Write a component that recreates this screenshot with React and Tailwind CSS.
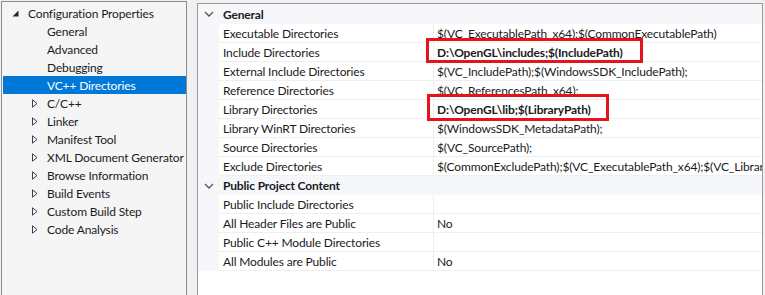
const treeItems = [
  { label: 'General' },
  { label: 'Advanced' },
  { label: 'Debugging' },
  { label: 'VC++ Directories', selected: true },
  { label: 'C/C++', expandable: true },
  { label: 'Linker', expandable: true },
  { label: 'Manifest Tool', expandable: true },
  { label: 'XML Document Generator', expandable: true },
  { label: 'Browse Information', expandable: true },
  { label: 'Build Events', expandable: true },
  { label: 'Custom Build Step', expandable: true },
  { label: 'Code Analysis', expandable: true },
];

const sections = [
  {
    title: 'General',
    rows: [
      { name: 'Executable Directories', value: '$(VC_ExecutablePath_x64);$(CommonExecutablePath)' },
      { name: 'Include Directories', value: 'D:\\OpenGL\\includes;$(IncludePath)', bold: true, box: 'include' },
      { name: 'External Include Directories', value: '$(VC_IncludePath);$(WindowsSDK_IncludePath);' },
      { name: 'Reference Directories', value: '$(VC_ReferencesPath_x64);' },
      { name: 'Library Directories', value: 'D:\\OpenGL\\lib;$(LibraryPath)', bold: true, box: 'library' },
      { name: 'Library WinRT Directories', value: '$(WindowsSDK_MetadataPath);' },
      { name: 'Source Directories', value: '$(VC_SourcePath);' },
      { name: 'Exclude Directories', value: '$(CommonExcludePath);$(VC_ExecutablePath_x64);$(VC_LibraryPath_x64);' },
    ],
  },
  {
    title: 'Public Project Content',
    rows: [
      { name: 'Public Include Directories', value: '' },
      { name: 'All Header Files are Public', value: 'No' },
      { name: 'Public C++ Module Directories', value: '' },
      { name: 'All Modules are Public', value: 'No' },
    ],
  },
];

function HollowArrow() {
  return (
    <svg width="6" height="9" viewBox="0 0 6 9" className="shrink-0">
      <path d="M0.5 0.8 L5 4.5 L0.5 8.2 Z" fill="none" stroke="#404040" strokeWidth="1" />
    </svg>
  );
}

function SolidArrow() {
  return (
    <svg width="7" height="7" viewBox="0 0 7 7" className="shrink-0">
      <path d="M6.5 0.5 L6.5 6.5 L0.5 6.5 Z" fill="#262626" />
    </svg>
  );
}

function Chevron() {
  return (
    <svg width="10" height="6" viewBox="0 0 10 6">
      <path d="M1 1 L5 5 L9 1" fill="none" stroke="#555" strokeWidth="1.3" />
    </svg>
  );
}

export default function App() {
  return (
    <div
      className="w-[765px] h-[295px] overflow-hidden bg-[#f0f0f0] flex items-start text-[12px] tracking-[-0.15px] text-[#1b1b1b]"
      style={{ fontFamily: 'Lato, "Noto Sans", sans-serif' }}
    >
      {/* Tree */}
      <div className="ml-[1px] mt-[1px] w-[186px] h-[310px] shrink-0 border border-[#8c8c8c] bg-[#f5f5f5] pt-[2px] overflow-hidden">
        <div className="h-[18px] flex items-center pl-[10px]">
          <SolidArrow />
          <span className="ml-[9px] pt-[1px] leading-none">Configuration Properties</span>
        </div>
        {treeItems.map((item) => (
          <div
            key={item.label}
            className={
              item.selected
                ? 'h-[18px] flex items-center ml-[1px] bg-[#0078d7] text-white'
                : 'h-[18px] flex items-center ml-[1px]'
            }
          >
            <div className="w-[44px] shrink-0 flex justify-end pr-[9px]">
              {item.expandable && <HollowArrow />}
            </div>
            <span className="pt-[1px] leading-none whitespace-nowrap">{item.label}</span>
          </div>
        ))}
      </div>

      {/* Property grid */}
      <div className="ml-[10px] mt-[3px] w-[566px] h-[310px] shrink-0 border border-[#9a9a9a] bg-white overflow-hidden">
        {sections.map((section, si) => (
          <div key={section.title}>
            <div className={si === 0 ? 'h-[20px] flex items-center bg-[#f5f7fa]' : 'h-[19px] flex items-center bg-[#f5f7fa]'}>
              <div className="w-[21px] flex justify-center pl-[1px]">
                <Chevron />
              </div>
              <span className="pl-[4px] pt-[1px] font-bold leading-none">{section.title}</span>
            </div>
            {section.rows.map((row) => (
              <div key={row.name} className="h-[19px] flex">
                <div className="w-[21px] shrink-0 bg-[#f5f7fa]" />
                <div className="w-[215px] shrink-0 flex items-center pl-[4px] pt-[1px] border-b border-r border-[#efefef] whitespace-nowrap">
                  {row.name}
                </div>
                <div className="relative flex-1 min-w-0 flex items-center pl-[3px] pt-[1px] border-b border-[#efefef] whitespace-nowrap">
                  <span className={row.bold ? 'font-bold' : ''}>{row.value}</span>
                  {row.box === 'include' && (
                    <span className="absolute left-[-8px] top-[-5px] w-[217px] h-[25px] border-[3px] border-[#e3141c]" />
                  )}
                  {row.box === 'library' && (
                    <span className="absolute left-[-7px] top-[-6px] w-[182px] h-[27px] border-[3px] border-[#e3141c]" />
                  )}
                </div>
              </div>
            ))}
          </div>
        ))}
      </div>
    </div>
  );
}
